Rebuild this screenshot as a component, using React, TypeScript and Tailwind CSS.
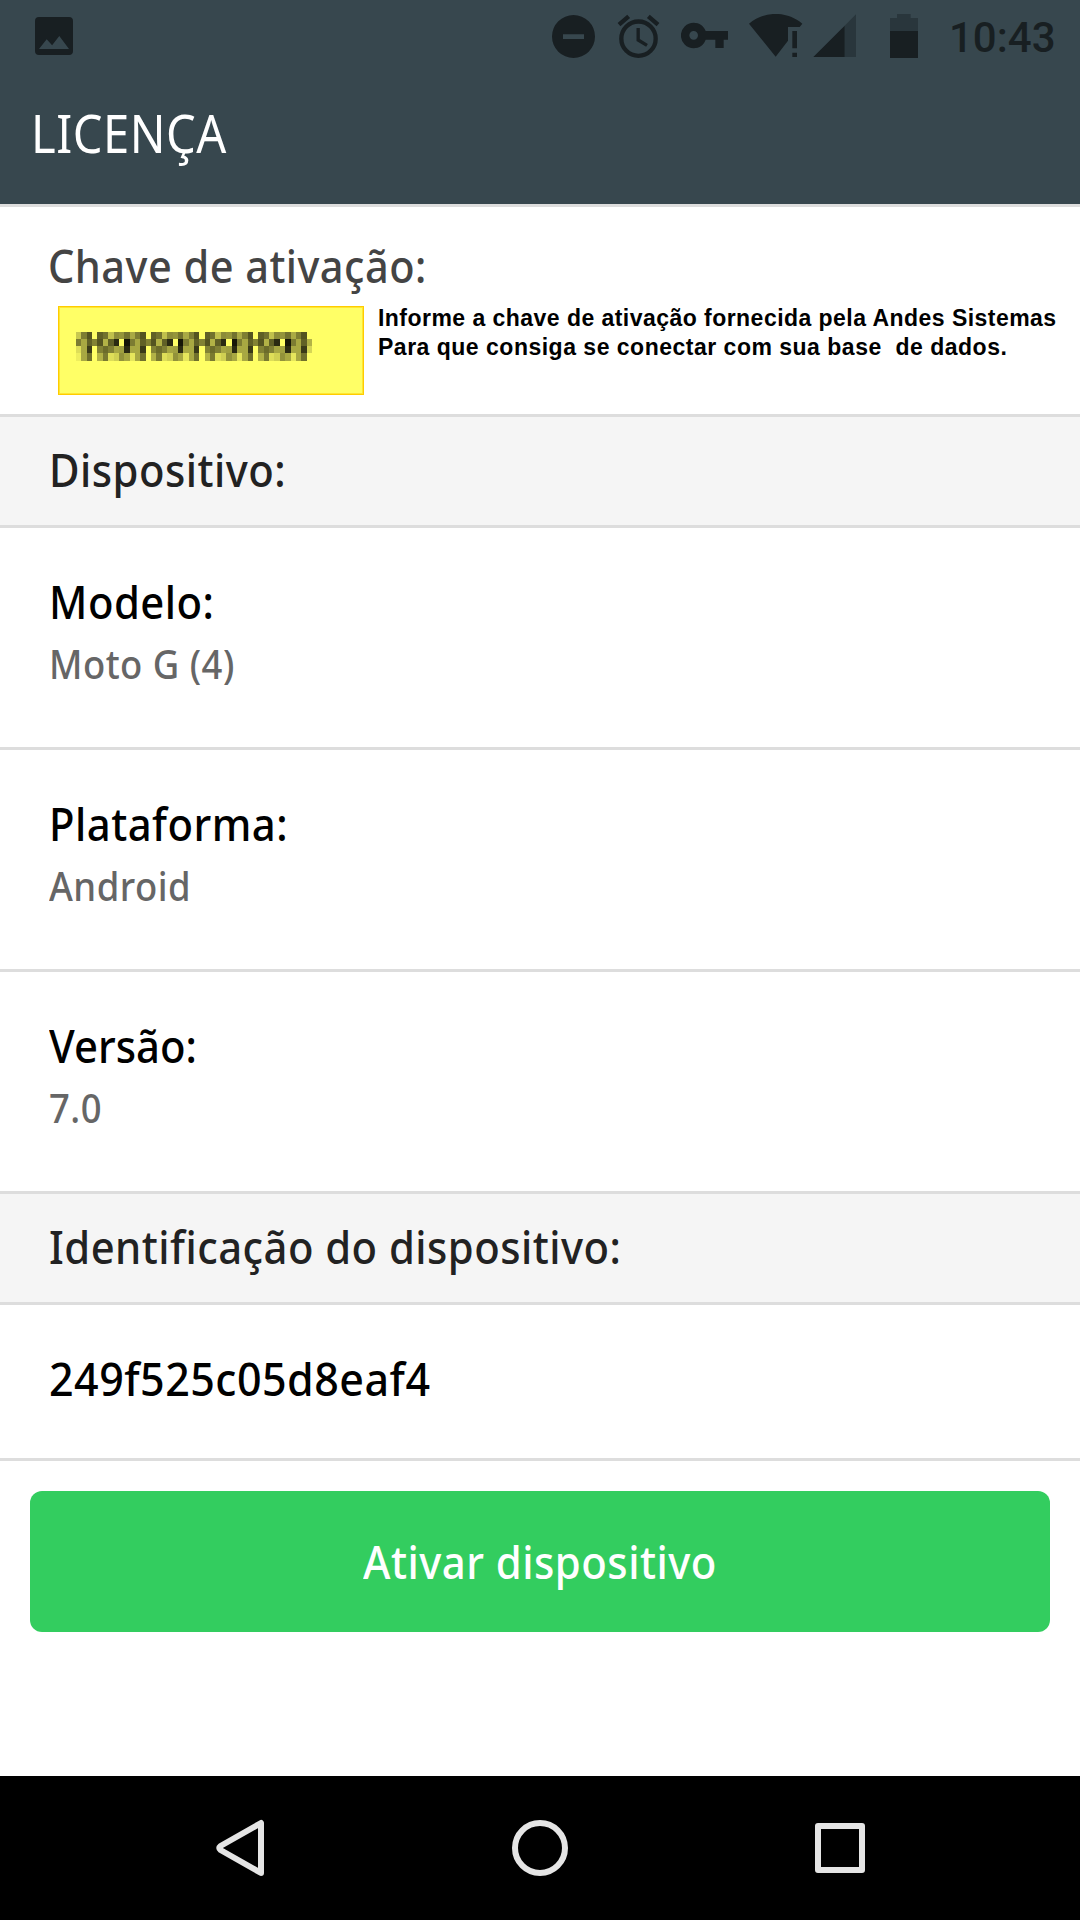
import type { ReactNode } from 'react';

const MOSAIC_TOP = ['#c8c850', '#7e7e32', '#545420', '', '#606026', '#72722e', '#c0c04c', '#8c8c38', '#94943a', '#72722e'];
const MOSAIC_UPPER = ['#7c7c32', '#a8a842', '#606026', '#828234', '#545420', '#b2b246', '#606026', '#2a2a12', '', '#161608'];
const MOSAIC_LOWER = ['#dede58', '#a8a842', '#3a3a18', '', '#828234', '#6c6c2a', '#808034', '#a6a642', '#a0a040', '#2a2a12'];
const MOSAIC_BOTTOM = ['#eeee5e', '#a8a842', '#70702c', '', '#b2b246', '#7a7a30', '#dede58', '#d0d052', '#92923a', '#a8a842'];
const MOSAIC_ROWS = [
  { cells: MOSAIC_TOP, y: 0, h: 7, first: '#c8c850', next: '#aaaa44', last: '' },
  { cells: MOSAIC_UPPER, y: 7, h: 7, first: '#7c7c32', next: '#7c7c32', last: '#b2b246' },
  { cells: MOSAIC_LOWER, y: 14, h: 7, first: '#dede58', next: '#a8a842', last: '#d6d656' },
  { cells: MOSAIC_BOTTOM, y: 21, h: 8, first: '#eeee5e', next: '#e6e65c', last: '' },
];
const MOSAIC_COLS = 44;

function cellEdge(i: number) {
  return Math.round((i * 236) / MOSAIC_COLS);
}

function MaskedKey() {
  return (
    <svg className="h-[29px] w-[236px]" viewBox="0 0 236 29" shapeRendering="crispEdges">
      {MOSAIC_ROWS.map((row) =>
        Array.from({ length: MOSAIC_COLS }, (_, i) => {
          let fill = row.cells[i % 10];
          if (i % 10 === 0) fill = i === 0 ? row.first : row.next;
          if (i === MOSAIC_COLS - 1) fill = row.last;
          if (!fill) return null;
          return (
            <rect key={`${row.y}-${i}`} x={cellEdge(i)} y={row.y} width={cellEdge(i + 1) - cellEdge(i)} height={row.h} fill={fill} />
          );
        }),
      )}
    </svg>
  );
}

function StatusBar() {
  return (
    <div className="flex h-[72px] items-start pt-[14px] pl-[35px] text-[#181f22]">
      <svg className="mt-[3px] h-[38px] w-[38px]" viewBox="0 0 38 38" fill="currentColor">
        <path fillRule="evenodd" d="M4 0H34Q38 0 38 4V34Q38 38 34 38H4Q0 38 0 34V4Q0 0 4 0ZM4 32H34L24.3 19L17.1 28.3L11.7 22.3Z" />
      </svg>
      <svg className="ml-[479px] h-[44px] w-[43px]" viewBox="36 42 129 132" fill="currentColor">
        <path fillRule="evenodd" d="M100.500 45A64.500 64.500 0 1 1 100.500 174A64.500 64.500 0 1 1 100.500 45ZM69 103V117H132V103Z" />
      </svg>
      <svg className="ml-[22px] h-[44px] w-[43px]" viewBox="231 42 129 132" fill="none" stroke="currentColor">
        <circle cx="295.500" cy="116" r="51.500" strokeWidth="13" />
        <path d="M294.500 84V120L321 136" strokeWidth="10" />
        <path d="M237 74L266 49M325 49L354 74" strokeWidth="13" />
      </svg>
      <svg className="ml-[21px] h-[44px] w-[47px]" viewBox="423 42 141 132" fill="currentColor">
        <path fillRule="evenodd" d="M461 68C478 68 492 78 497 93H564V119H551V144H526V119H497C492 134 478 144.500 461 144.500A38.250 38.250 0 0 1 461 68ZM461 93A13 13 0 1 0 461 119A13 13 0 1 0 461 93Z" />
      </svg>
      <svg className="ml-[21px] h-[44px] w-[54px]" viewBox="627 42 162 132" fill="currentColor">
        <path d="M627 71C672 32 741 32 787 71L779 81H744V122L707 170Z" />
        <path d="M757 93H771V145H757ZM757 158H771V171H757Z" />
      </svg>
      <svg className="ml-[10px] h-[44px] w-[44px]" viewBox="39 42 132 132" fill="currentColor">
        <path d="M168 43V171H134V77Z" fill="#29363c" />
        <path d="M134 77V171H40Z" />
      </svg>
      <svg className="ml-[33px] h-[44px] w-[28px]" viewBox="270 42 84 132" fill="currentColor">
        <path d="M291 42H332V54H354V93H270V54H291Z" fill="#29363c" />
        <path d="M270 93H354V174H270Z" />
      </svg>
      <span className="mt-px ml-[31px] font-['Roboto',sans-serif] text-[42px] leading-[46px] font-medium">10:43</span>
    </div>
  );
}

function SectionHeader({ children }: { children: ReactNode }) {
  return (
    <div className="h-[111px] border-b-[3px] border-[#dddddd] bg-[#f5f5f5] pt-[23px] pl-[49px] text-[45px] leading-[60px] font-medium text-[#222222]">
      <span className="inline-block origin-left scale-x-[0.929] tracking-[0.5px] whitespace-nowrap">{children}</span>
    </div>
  );
}

function DetailRow({ label, value }: { label: ReactNode; value: ReactNode }) {
  return (
    <div className="h-[222px] border-b-[3px] border-[#dddddd] pt-[44px] pl-[49px]">
      <p className="origin-left scale-x-[0.93] text-[45px] leading-[60px] font-medium tracking-[0.5px] text-black">{label}</p>
      <p className="mt-[2px] origin-left scale-x-[0.935] text-[39px] leading-[60px] font-medium tracking-[0.5px] text-[#666666]">{value}</p>
    </div>
  );
}

export default function App() {
  return (
    <div className="flex h-[1920px] w-[1080px] flex-col overflow-hidden bg-white font-['Noto_Sans',sans-serif]">
      <header className="h-[207px] border-b-[3px] border-[#dddddd] bg-[#37474e]">
        <StatusBar />
        <h1 className="mt-[31px] ml-[31px] origin-left scale-x-[0.905] text-[52px] leading-[60px] tracking-[0.6px] text-white">LICENÇA</h1>
      </header>

      <main className="flex-1">
        <section className="h-[210px] border-b-[3px] border-[#dddddd] pt-[29px]">
          <p className="ml-[48px] origin-left scale-x-[0.923] text-[45px] leading-[60px] font-medium tracking-[0.5px] text-[#444444]">Chave de ativação:</p>
          <div className="mt-[7px] flex pl-[58px]">
            <div className="mt-[3px] h-[89px] w-[306px] border border-[#ffcc00] bg-[#ffff66] pt-[25px] pl-[17px] shadow-[inset_0_0_0_1px_#ffe633]">
              <MaskedKey />
            </div>
            <p className="mt-px ml-[14px] font-['Liberation_Sans',sans-serif] text-[23px] leading-[29px] font-bold whitespace-pre text-black">
              <span className="block tracking-[0.46px]">Informe a chave de ativação fornecida pela Andes Sistemas</span>
              <span className="block tracking-[0.5px]">Para que consiga se conectar com sua base{'  '}de dados.</span>
            </p>
          </div>
        </section>

        <SectionHeader>Dispositivo:</SectionHeader>
        <DetailRow label="Modelo:" value="Moto G (4)" />
        <DetailRow label="Plataforma:" value="Android" />
        <DetailRow label={<span className="tracking-[0px]">Versão:</span>} value="7.0" />
        <SectionHeader>Identificação do dispositivo:</SectionHeader>
        <div className="h-[156px] border-b-[3px] border-[#dddddd] pt-[44px] pl-[49px] text-[45px] leading-[60px] font-medium text-black">
          <p className="origin-left scale-x-[0.956] tracking-[0.5px]">249f525c05d8eaf4</p>
        </div>

        <button className="mx-[30px] mt-[30px] flex h-[141px] w-[1020px] justify-center rounded-[12px] bg-[#33cd5f] pt-[41px] text-[45px] leading-[60px] font-medium text-white">
          <span className="scale-x-[0.931] tracking-[0.5px]">Ativar dispositivo</span>
        </button>
      </main>

      <nav className="flex h-[144px] items-center justify-center gap-[236px] bg-black text-[#e5e5e5]">
        <svg className="h-16 w-16" viewBox="0 0 64 64" fill="none" stroke="currentColor" strokeWidth="6" strokeLinejoin="round">
          <path d="M53 7V57L12.500 34Q10 32 12.500 30Z" />
        </svg>
        <svg className="h-16 w-16" viewBox="0 0 64 64" fill="none" stroke="currentColor" strokeWidth="6">
          <circle cx="32" cy="32" r="25" />
        </svg>
        <svg className="h-16 w-16" viewBox="0 0 64 64" fill="none" stroke="currentColor" strokeWidth="6" strokeLinejoin="round">
          <rect x="10" y="10" width="44" height="44" />
        </svg>
      </nav>
    </div>
  );
}
